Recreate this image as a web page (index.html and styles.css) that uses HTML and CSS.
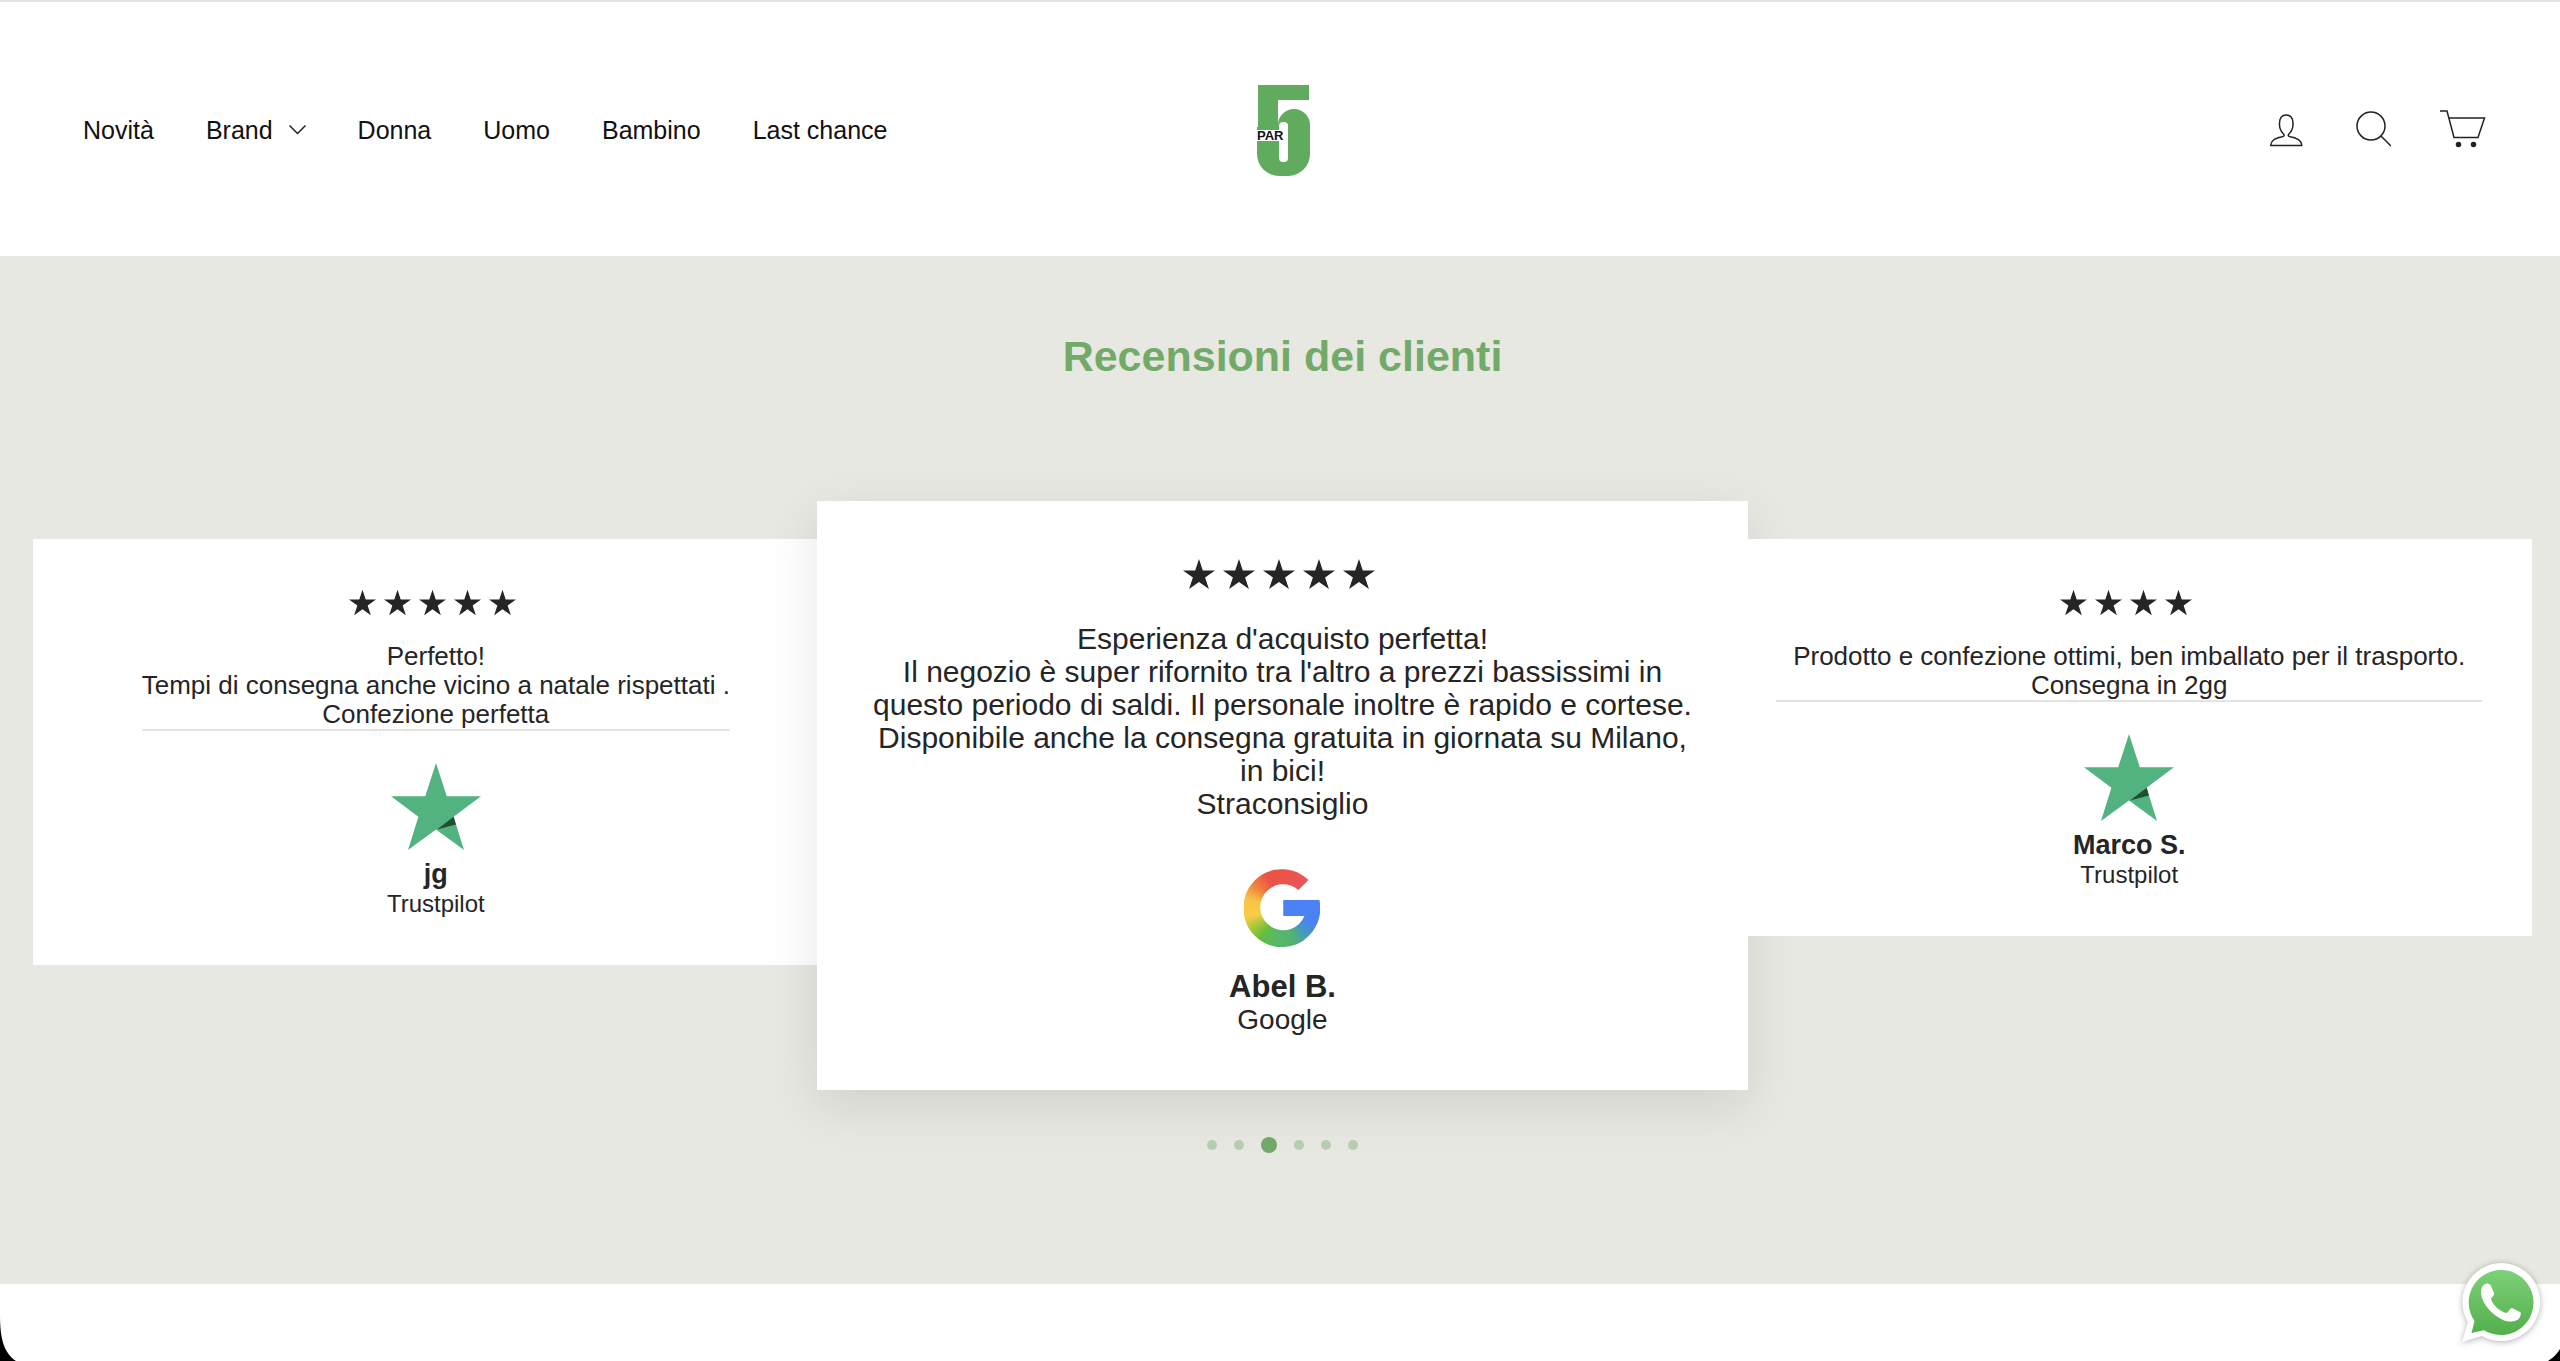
FILE: index.html
```
<!DOCTYPE html>
<html lang="it">
<head>
    <meta charset="UTF-8">
    <meta name="viewport" content="width=device-width, initial-scale=1.0">
    <title>5PAR - Recensioni dei clienti</title>
    <link rel="stylesheet" href="styles.css">
</head>
<body>
    <!-- Shared icons -->
    <svg class="sprite" aria-hidden="true">
        <symbol id="star" viewBox="0 0 32 30">
            <path d="M16 0l3.8 11.4H32l-9.9 7.1L25.9 30 16 22.9 6.1 30l3.8-11.5L0 11.4h12.2z"/>
        </symbol>
        <symbol id="trustpilot" viewBox="0 0 90 87">
            <path fill="#53b380" d="M45 0l10.800 33.200H90L62.600 53.800 73 87 45 66.500 17 87l10.400-33.200L0 33.200h34.200z"/>
            <path fill="#205030" d="M62.600 53.800l2.400 7.700L46 66.500z"/>
        </symbol>
    </svg>

    <header class="site-header">
        <nav>
            <ul class="nav-list">
                <li><a href="#">Novità</a></li>
                <li>
                    <a href="#">Brand
                        <svg class="chevron" viewBox="0 0 17 10" aria-hidden="true"><path d="M.5 .5l8 8 8-8"/></svg>
                    </a>
                </li>
                <li><a href="#">Donna</a></li>
                <li><a href="#">Uomo</a></li>
                <li><a href="#">Bambino</a></li>
                <li><a href="#">Last chance</a></li>
            </ul>
        </nav>

        <a href="#" class="logo" aria-label="5PAR">
            <svg viewBox="0 0 56 92">
                <!-- bar, stem and bowl of the mark -->
                <g class="logo-mark">
                    <rect x="1" y="0" width="51" height="15"/>
                    <rect x="1" y="0" width="20" height="60"/>
                    <rect x="21" y="24" width="32" height="50" rx="16"/>
                    <rect x="40" y="42" width="13" height="26"/>
                    <rect x="0" y="42" width="53" height="49" rx="22"/>
                    <rect x="0" y="42" width="24" height="24"/>
                </g>
                <g class="logo-cut">
                    <rect x="22" y="37" width="9" height="40" rx="4"/>
                    <rect x="0" y="45" width="25" height="11"/>
                </g>
                <text class="logo-par" x="0" y="55">PAR</text>
            </svg>
        </a>

        <div class="header-icons">
            <a href="#" aria-label="Account">
                <svg width="36" height="40" viewBox="0 0 36 40">
                    <path d="M.7 35.500c0-5 6-8.200 11.500-8.800 2.500-.4 2.500-2 .5-3.700-2.500-2.500-3.400-6.200-3.200-10C9.700 7.500 11.700 5 16.200 5s6.600 2.500 6.800 8c.2 3.800-.8 7.500-3.300 10-2 1.700-2 3.300.5 3.700 5.500.6 11.500 3.800 11.500 8.800z"/>
                </svg>
            </a>
            <a href="#" aria-label="Cerca">
                <svg width="36" height="40" viewBox="0 0 36 40">
                    <circle cx="16" cy="16" r="14"/>
                    <path d="M26 26l10 10"/>
                </svg>
            </a>
            <a href="#" aria-label="Carrello">
                <svg width="46" height="40" viewBox="0 0 46 40">
                    <path d="M0 1h7l7 26.500h24L44.500 8H9"/>
                    <circle class="wheel" cx="18.500" cy="34.500" r="2"/>
                    <circle class="wheel" cx="33.500" cy="34.500" r="2"/>
                </svg>
            </a>
        </div>
    </header>

    <main>
        <section class="reviews">
            <h2>Recensioni dei clienti</h2>

            <div class="slider">
                <article class="card prev">
                    <div class="stars" role="img" aria-label="5 stelle">
                        <svg><use href="#star"/></svg>
                        <svg><use href="#star"/></svg>
                        <svg><use href="#star"/></svg>
                        <svg><use href="#star"/></svg>
                        <svg><use href="#star"/></svg>
                    </div>
                    <p class="review-text">Perfetto!<br>Tempi di consegna anche vicino a natale rispettati .<br>Confezione perfetta</p>
                    <div class="source-icon"><svg class="trustpilot"><use href="#trustpilot"/></svg></div>
                    <h3>jg</h3>
                    <p class="source">Trustpilot</p>
                </article>

                <article class="card active">
                    <div class="stars" role="img" aria-label="5 stelle">
                        <svg><use href="#star"/></svg>
                        <svg><use href="#star"/></svg>
                        <svg><use href="#star"/></svg>
                        <svg><use href="#star"/></svg>
                        <svg><use href="#star"/></svg>
                    </div>
                    <p class="review-text">Esperienza d'acquisto perfetta!<br>Il negozio è super rifornito tra l'altro a prezzi bassissimi in questo periodo di saldi. Il personale inoltre è rapido e cortese. Disponibile anche la consegna gratuita in giornata su Milano, in bici!<br>Straconsiglio</p>
                    <div class="source-icon"><div class="google"></div></div>
                    <h3>Abel B.</h3>
                    <p class="source">Google</p>
                </article>

                <article class="card next">
                    <div class="stars" role="img" aria-label="4 stelle">
                        <svg><use href="#star"/></svg>
                        <svg><use href="#star"/></svg>
                        <svg><use href="#star"/></svg>
                        <svg><use href="#star"/></svg>
                    </div>
                    <p class="review-text">Prodotto e confezione ottimi, ben imballato per il trasporto. Consegna in 2gg</p>
                    <div class="source-icon"><svg class="trustpilot"><use href="#trustpilot"/></svg></div>
                    <h3>Marco S.</h3>
                    <p class="source">Trustpilot</p>
                </article>
            </div>

            <div class="dots">
                <button type="button" aria-label="Recensione 1"></button>
                <button type="button" aria-label="Recensione 2"></button>
                <button type="button" aria-label="Recensione 3" class="current"></button>
                <button type="button" aria-label="Recensione 4"></button>
                <button type="button" aria-label="Recensione 5"></button>
                <button type="button" aria-label="Recensione 6"></button>
            </div>
        </section>
    </main>

    <!-- Rounded window corners -->
    <svg class="corner corner-left" width="16" height="46" viewBox="0 0 16 46" aria-hidden="true"><path d="M0 0C0 24 4 38 16 46H0z"/></svg>
    <svg class="corner corner-right" width="12" height="12" viewBox="0 0 12 12" aria-hidden="true"><path d="M12 0Q8 7 0 12H12z"/></svg>

    <a href="#" class="whatsapp" aria-label="WhatsApp">
        <svg width="80" height="80" viewBox="0 0 80 80">
            <defs>
                <linearGradient id="wa" x1="0" y1="0" x2="0" y2="1">
                    <stop offset="0" stop-color="#7dd078"/>
                    <stop offset="1" stop-color="#54af4b"/>
                </linearGradient>
            </defs>
            <path fill="#fff" d="M40 1a39 39 0 1 1-19 73L1 80l6-20A39 39 0 0 1 40 1z"/>
            <path fill="url(#wa)" d="M40 8a32.500 32.500 0 1 1-17 60.200L10.500 71l3-12A32.500 32.500 0 0 1 40 8z"/>
            <path fill="#fff" d="M24 22c3-1 5 0 6 2l3 7c1 2-3 5-3 6 2 6 8 12 15 14 2 0 4-5 6-5l8 4c2 1 0 7-3 8-4 2-9 2-14 0C32 53 24 45 21 36c-2-6-1-12 3-14z"/>
        </svg>
    </a>
</body>
</html>
```
FILE: styles.css
```
* {
    box-sizing: border-box;
}
body {
    margin: 0;
    background-color: #fff;
    color: #252525;
    font-family: "Liberation Sans", Arial, sans-serif;
}
a {
    color: inherit;
    text-decoration: none;
}
h2, h3, p {
    margin: 0;
}
.sprite {
    position: absolute;
    width: 0;
    height: 0;
}

/* Header */
.site-header {
    display: grid;
    grid-template-columns: 1fr auto 1fr;
    align-items: center;
    height: 256px;
    padding: 2px 74px 0 83px;
    border-top: 2px solid #e2e2e2;
}
.nav-list {
    display: flex;
    gap: 52px;
    margin: 0;
    padding: 0;
    list-style: none;
    color: #111;
    font-size: 25px;
    line-height: 32px;
}
.nav-list a {
    display: flex;
    align-items: center;
    gap: 16px;
    white-space: nowrap;
}
.chevron {
    width: 17px;
    height: 10px;
    fill: none;
    stroke: #222;
    stroke-width: 1.5;
}
.logo {
    padding-top: 2px;
}
.logo svg {
    display: block;
    width: 56px;
    height: 92px;
    overflow: visible;
}
.logo-mark {
    fill: #61ab5e;
}
.logo-cut {
    fill: #fff;
}
.logo-par {
    fill: #111;
    font-size: 13px;
    font-weight: bold;
}
.header-icons {
    display: flex;
    justify-content: flex-end;
    gap: 49px;
}
.header-icons svg {
    display: block;
    fill: none;
    stroke: #222;
    stroke-width: 1.5;
}
.header-icons .wheel {
    fill: #222;
}

/* Reviews */
.reviews {
    padding: 75px 28px 131px 33px;
    background-color: #e6e8e1;
    text-align: center;
}
.reviews h2 {
    margin-bottom: 120px;
    color: #73aa69;
    font-size: 43px;
    line-height: 50px;
}
.slider {
    display: grid;
    grid-template-columns: 783fr 931fr 783fr;
    align-items: start;
}
.card {
    display: flex;
    flex-direction: column;
    align-items: center;
    margin-top: 38px;
    padding: 50px 50px 48px;
    background-color: #fff;
}
/* side cards overlap the active one, its shadow falls on the previous card only */
.card.prev {
    margin-right: -22px;
}
.card.next {
    position: relative;
    z-index: 2;
    margin-left: -22px;
}
.card.active {
    position: relative;
    z-index: 1;
    margin-top: 0;
    padding: 58px 55px 54px;
    box-shadow: 0 16px 48px rgba(0, 0, 0, 0.1);
}
.stars {
    display: flex;
    gap: 8px;
    margin-bottom: 26px;
    padding-right: 6px;
    fill: #252525;
}
.stars svg {
    width: 27px;
    height: 27px;
}
.review-text {
    border-bottom: 2px solid #e4e4e4;
    font-size: 26px;
    line-height: 29px;
}
.source-icon {
    display: flex;
    align-items: center;
    height: 90px;
    margin: 30px 0 8px;
}
.trustpilot {
    width: 90px;
    height: 87px;
}
.card h3 {
    font-size: 27px;
    line-height: 31px;
}
.card .source {
    font-size: 24px;
    line-height: 27px;
}
.active .stars {
    margin-bottom: 33px;
}
.active .stars svg {
    width: 32px;
    height: 30px;
}
.active .review-text {
    border-bottom: 0;
    font-size: 30px;
    line-height: 33px;
}
.active .source-icon {
    height: 104px;
    margin: 36px 0 10px;
}
.active h3 {
    font-size: 31px;
    line-height: 34px;
}
.active .source {
    font-size: 28px;
    line-height: 32px;
}
.google {
    width: 76px;
    height: 78px;
    background:
        linear-gradient(#4a82f6, #4a82f6) 38px 30px / 30px 17px no-repeat,
        conic-gradient(#ec5347, #e8575c 45deg, #4a82f6 75deg, #4a82f6 115deg, #4496c8 135deg, #52b272 160deg, #56b868 190deg, #62be40 215deg, #b8c83c 240deg, #f6ce46 255deg, #f8c444 285deg, #f08040 310deg, #ec5347 335deg);
    clip-path: path("M64 11L54 21A23 23 0 1 0 60 47H39V31H75A38.5 39 0 1 1 64 11Z");
}

/* Slider dots */
.dots {
    display: flex;
    align-items: center;
    justify-content: center;
    gap: 17px;
    margin-top: 47px;
}
.dots button {
    width: 10px;
    height: 10px;
    padding: 0;
    border: 0;
    border-radius: 50%;
    background-color: #b7ceb0;
    cursor: pointer;
}
.dots .current {
    width: 16px;
    height: 16px;
    background-color: #73aa69;
}

/* Floating elements */
.whatsapp {
    position: fixed;
    right: 19px;
    bottom: 19px;
    filter: drop-shadow(0 1px 3px rgba(0, 0, 0, 0.3));
}
.whatsapp svg {
    display: block;
}
.corner {
    position: fixed;
    bottom: 0;
    fill: #000;
}
.corner-left {
    left: 0;
}
.corner-right {
    right: 0;
}
```
